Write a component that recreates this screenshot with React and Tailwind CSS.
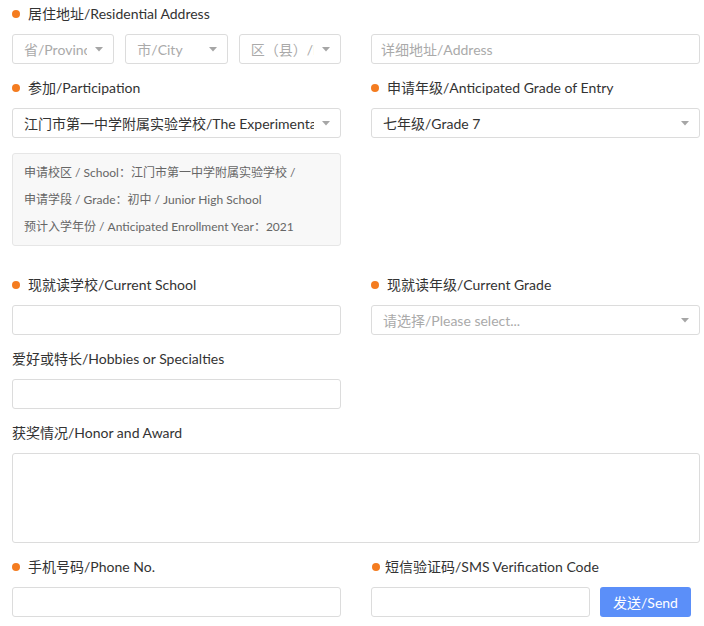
import React from "react";

const font = { fontFamily: 'Lato, "Noto Sans CJK SC", sans-serif' };

function Label({ children, required = true }) {
  return (
    <div className="flex items-center h-5 text-[14px] text-[#333] leading-5">
      {required && (
        <span className="w-2 h-2 rounded-full bg-[#f47c20] mr-2 shrink-0" />
      )}
      <span className="whitespace-nowrap">{children}</span>
    </div>
  );
}

function Caret() {
  return (
    <svg width="8" height="5" viewBox="0 0 8 5" className="shrink-0">
      <path d="M0 0 L8 0 L4 4.5 Z" fill="#a6a6a6" />
    </svg>
  );
}

function Select({ text, placeholder = false, className = "" }) {
  return (
    <div
      className={`h-[30px] border border-[#dcdcdc] rounded-[3px] bg-white flex items-center pl-[11px] pr-[10px] gap-2 ${className}`}
    >
      <span
        className={`flex-1 overflow-hidden whitespace-nowrap text-[14px] ${
          placeholder ? "text-[#aaa]" : "text-[#333]"
        }`}
      >
        {text}
      </span>
      <Caret />
    </div>
  );
}

function Input({ placeholder, className = "" }) {
  return (
    <div
      className={`h-[30px] border border-[#dcdcdc] rounded-[3px] bg-white flex items-center px-[9px] text-[14px] text-[#aaa] ${className}`}
    >
      {placeholder}
    </div>
  );
}

export default function App() {
  return (
    <div className="w-[704px] bg-white pl-3 pr-[4px] pt-1" style={font}>
      {/* address */}
      <div className="grid grid-cols-[329px_329px] gap-x-[30px]">
        <div>
          <Label>居住地址/Residential Address</Label>
          <div className="mt-[10px] grid grid-cols-3 gap-[11px]">
            <Select text="省/Province" placeholder />
            <Select text="市/City" placeholder />
            <Select text="区（县）/District" placeholder />
          </div>
        </div>
        <div className="pt-5">
          <Input placeholder="详细地址/Address" className="mt-[10px]" />
        </div>
      </div>

      {/* participation */}
      <div className="mt-[14px] grid grid-cols-[329px_329px] gap-x-[30px]">
        <div>
          <Label>参加/Participation</Label>
          <Select
            className="mt-[10px]"
            text="江门市第一中学附属实验学校/The Experimental School Affiliated to Jiangmen No.1 Middle School"
          />
          <div className="mt-[15px] bg-[#f8f8f8] border border-[#e6e6e6] rounded-[3px] px-[11px] py-[5px] text-[12px] text-[#666] leading-[27px]">
            <p>申请校区 / School：江门市第一中学附属实验学校 /</p>
            <p>申请学段 / Grade：初中 / Junior High School</p>
            <p>预计入学年份 / Anticipated Enrollment Year：2021</p>
          </div>
        </div>
        <div>
          <Label>申请年级/Anticipated Grade of Entry</Label>
          <Select className="mt-[10px]" text="七年级/Grade 7" />
        </div>
      </div>

      {/* current school */}
      <div className="mt-[29px] grid grid-cols-[329px_329px] gap-x-[30px]">
        <div>
          <Label>现就读学校/Current School</Label>
          <Input className="mt-[10px]" />
        </div>
        <div>
          <Label>现就读年级/Current Grade</Label>
          <Select className="mt-[10px]" text="请选择/Please select..." placeholder />
        </div>
      </div>

      {/* hobbies */}
      <div className="mt-[14px] w-[329px]">
        <Label required={false}>爱好或特长/Hobbies or Specialties</Label>
        <Input className="mt-[10px]" />
      </div>

      {/* honor */}
      <div className="mt-[14px]">
        <Label required={false}>获奖情况/Honor and Award</Label>
        <div className="mt-[10px] h-[90px] border border-[#dcdcdc] rounded-[3px] bg-white" />
      </div>

      {/* phone */}
      <div className="mt-[14px] grid grid-cols-[329px_329px] gap-x-[30px] pb-[9px]">
        <div>
          <Label>手机号码/Phone No.</Label>
          <Input className="mt-[10px]" />
        </div>
        <div>
          <div className="flex items-center h-5 text-[14px] text-[#333] leading-5">
            <span className="w-2 h-2 rounded-full bg-[#f47c20] mr-[5px] ml-[1px] shrink-0" />
            <span className="whitespace-nowrap">短信验证码/SMS Verification Code</span>
          </div>
          <div className="mt-[10px] flex items-center">
            <Input className="w-[219px]" />
            <button className="ml-[10px] w-[91px] h-[30px] rounded-[3px] bg-[#5b8ff9] text-white text-[14px]">
              发送/Send
            </button>
          </div>
        </div>
      </div>
    </div>
  );
}
